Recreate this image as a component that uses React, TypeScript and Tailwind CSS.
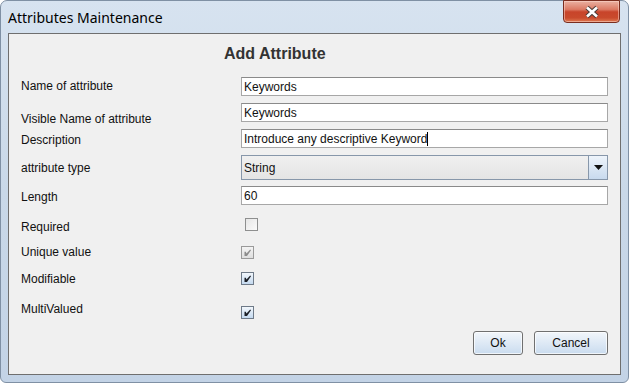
import React from "react";

function TextField({ value, caret }: { value: string; caret?: boolean }) {
  return (
    <div className="flex h-[19px] flex-1 items-center border border-[#a7a7a7] border-t-[#8a8a8a] bg-white pl-[2px] text-[12px] leading-[14px] text-[#111]">
      <span>{value}</span>
      {caret && <span className="h-[14px] w-px bg-black" />}
    </div>
  );
}

function CheckBox({ checked, disabled }: { checked?: boolean; disabled?: boolean }) {
  const box = !checked
    ? "border-[#8e8f8f] bg-gradient-to-br from-[#e6e6e6] to-[#fbfbfb]"
    : disabled
      ? "border-[#9a9a9a] bg-gradient-to-b from-[#f4f4f4] to-[#dedede]"
      : "border-[#6e7a88] bg-gradient-to-b from-[#f2f7fc] to-[#c4d9ef]";
  return (
    <div className={`flex h-[13px] w-[13px] items-center justify-center border ${box}`}>
      {checked && (
        <svg width="11" height="11" viewBox="0 0 11 11">
          <path
            d="M2.5 4.8 L2.5 9 L5 9 L9 3.2 L8.2 2.5 L4.5 6.5 L3.8 4.8 Z"
            fill={disabled ? "#8c8c8c" : "#1b1f26"}
          />
        </svg>
      )}
    </div>
  );
}

function Combo({ value }: { value: string }) {
  return (
    <div className="flex h-[25px] flex-1 border border-[#8797aa] bg-gradient-to-b from-[#f0f0f0] to-[#e4e4e4] text-[12px] leading-[14px] text-[#111]">
      <div className="flex flex-1 items-center pl-[2px]">{value}</div>
      <div className="flex w-[19px] items-center justify-center border-l border-[#8797aa] bg-gradient-to-b from-[#eef4fb] to-[#c8daee]">
        <svg width="9" height="5" viewBox="0 0 9 5">
          <path d="M0 0 H9 L4.5 5 Z" fill="#111" />
        </svg>
      </div>
    </div>
  );
}

function Row({
  label,
  rowClass,
  labelClass,
  children,
}: {
  label: string;
  rowClass: string;
  labelClass: string;
  children: React.ReactNode;
}) {
  return (
    <div className={`flex items-start ${rowClass}`}>
      <div className={`w-[220px] shrink-0 text-[12px] leading-[14px] text-[#111] ${labelClass}`}>{label}</div>
      {children}
    </div>
  );
}

function Button({ label, width }: { label: string; width: string }) {
  return (
    <div
      className={`flex h-[24px] ${width} items-center justify-center rounded-[3px] border border-[#707070] bg-gradient-to-b from-[#f2f6fb] to-[#cadcef] text-[12px] text-[#111] shadow-[inset_0_0_0_1px_rgba(255,255,255,0.7)]`}
    >
      {label}
    </div>
  );
}

export default function App() {
  return (
    <div className="h-[383px] w-[629px] overflow-hidden bg-white font-['Liberation_Sans',Arial,sans-serif]">
      <div className="flex h-[383px] w-[629px] flex-col rounded-t-[7px] rounded-b-[6px] border border-[#7f90a4] bg-gradient-to-b from-[#d7e3f0] via-[#c9d8e8] to-[#c3d3e6] px-[7px] pb-[7px]">
        {/* Title bar */}
        <div className="flex h-[32px] items-start justify-between">
          <div className="pt-[8px] font-['Noto_Sans',sans-serif] text-[14px] leading-[18px] text-black">
            Attributes Maintenance
          </div>
          <div className="-mt-px mr-px flex h-[23px] w-[57px] items-center justify-center rounded-b-[4px] border border-[#7a2d1f] bg-[linear-gradient(to_bottom,#eab1a2_0%,#dc7a64_40%,#c8442a_52%,#c94a2c_80%,#e07a52_100%)] shadow-[inset_0_0_0_1px_rgba(255,220,210,0.5)]">
            <svg width="16" height="14" viewBox="0 0 16 14">
              <path d="M3 2.5 L13 11.5 M13 2.5 L3 11.5" stroke="#4a3a36" strokeWidth="4.6" />
              <path d="M3 2.5 L13 11.5 M13 2.5 L3 11.5" stroke="#ffffff" strokeWidth="2.6" />
            </svg>
          </div>
        </div>

        {/* Content panel */}
        <div className="flex flex-1 flex-col border border-[#6f6f6f] bg-[#f0f0f0] px-[12px]">
          <div className="pl-[203px] pt-[11px] text-[16px] font-bold leading-[18px] text-[#333]">Add Attribute</div>

          <Row label="Name of attribute" rowClass="mt-[14px] h-[19px]" labelClass="mt-[2px]">
            <TextField value="Keywords" />
          </Row>
          <Row label="Visible Name of attribute" rowClass="mt-[7px] h-[19px]" labelClass="mt-[9px]">
            <TextField value="Keywords" />
          </Row>
          <Row label="Description" rowClass="mt-[7px] h-[19px]" labelClass="mt-[4px]">
            <TextField value="Introduce any descriptive Keyword" caret />
          </Row>
          <Row label="attribute type" rowClass="mt-[7px] h-[25px]" labelClass="mt-[6px]">
            <Combo value="String" />
          </Row>
          <Row label="Length" rowClass="mt-[6px] h-[19px]" labelClass="mt-[4px]">
            <TextField value="60" />
          </Row>
          <Row label="Required" rowClass="mt-[13px] h-[13px]" labelClass="mt-[2px]">
            <div className="ml-[4px]">
              <CheckBox />
            </div>
          </Row>
          <Row label="Unique value" rowClass="mt-[14px] h-[14px]" labelClass="mt-0">
            <div className="mt-[1px]">
              <CheckBox checked disabled />
            </div>
          </Row>
          <Row label="Modifiable" rowClass="mt-[13px] h-[14px]" labelClass="mt-0">
            <CheckBox checked />
          </Row>
          <Row label="MultiValued" rowClass="mt-[16px] h-[17px]" labelClass="mt-0">
            <div className="mt-[4px]">
              <CheckBox checked />
            </div>
          </Row>

          <div className="mt-[12px] flex justify-end gap-[11px]">
            <Button label="Ok" width="w-[50px]" />
            <Button label="Cancel" width="w-[74px]" />
          </div>
        </div>
      </div>
    </div>
  );
}
